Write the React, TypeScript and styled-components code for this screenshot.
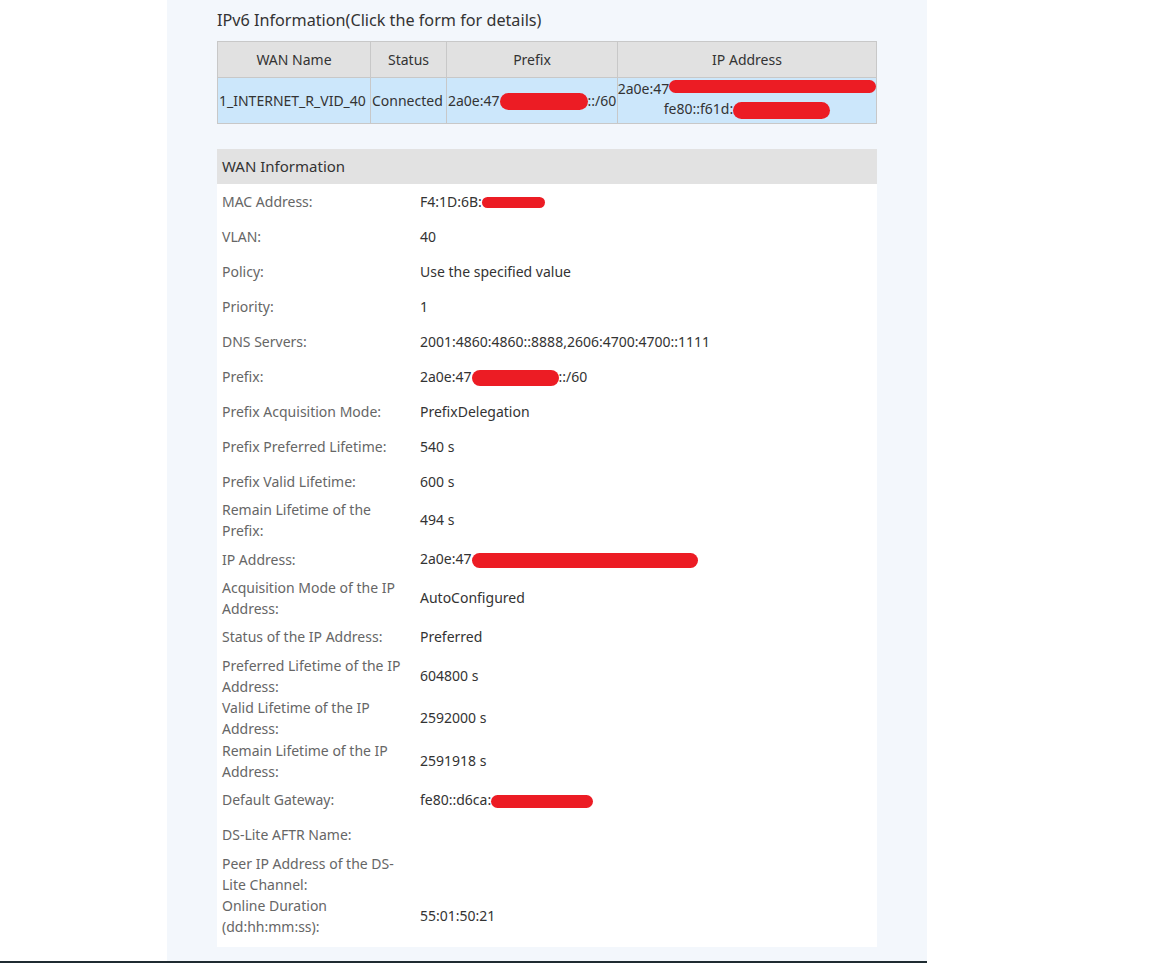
import React from 'react';
import styled, { createGlobalStyle } from 'styled-components';

const GlobalStyle = createGlobalStyle`
  html, body {
    margin: 0;
    padding: 0;
    background: #ffffff;
  }
  body {
    font-family: "Noto Sans", "Open Sans", Arial, sans-serif;
    color: #333333;
  }
`;

const Page = styled.div`
  display: flex;
  flex-direction: column;
  height: 963px;
  overflow: hidden;
`;

const Main = styled.div`
  flex: 1;
  min-height: 0;
  display: flex;
`;

const Panel = styled.div`
  margin-left: 167px;
  width: 760px;
  box-sizing: border-box;
  padding: 0 50px;
  background: #f3f7fc;
`;

const Footer = styled.div`
  flex: none;
  width: 927px;
  height: 2px;
  background: #1f2b31;
`;

const Title = styled.div`
  font-size: 16.2px;
  line-height: 22px;
  padding-top: 9px;
  margin-bottom: 10px;
  color: #333;
`;

const Table = styled.table`
  width: 660px;
  border-collapse: collapse;
  table-layout: fixed;
  font-size: 14px;
  cursor: pointer;
`;

const Th = styled.th<{ $w?: number }>`
  width: ${(p) => (p.$w ? `${p.$w}px` : 'auto')};
  height: 35px;
  padding: 0;
  font-weight: normal;
  background: #e1e1e1;
  border: 1px solid #c8c8c8;
  color: #333;
  text-align: center;
`;

const Td = styled.td<{ $center?: boolean }>`
  height: 45px;
  padding: 0 1px;
  background: #cce7fb;
  border: 1px solid #c8c8c8;
  text-align: ${(p) => (p.$center ? 'center' : 'left')};
  white-space: nowrap;
  overflow: hidden;
  line-height: 20px;
  color: #333;
`;

const Redact = styled.span<{ $w: number; $h?: number; $y?: number }>`
  display: inline-block;
  width: ${(p) => p.$w}px;
  height: ${(p) => p.$h ?? 14}px;
  background: #ec1c24;
  border-radius: 999px;
  vertical-align: middle;
  position: relative;
  top: ${(p) => p.$y ?? 0}px;
`;

const IpCell = styled.div`
  display: flex;
  flex-direction: column;
  align-items: center;
  margin-top: -4px;
`;

const Section = styled.div`
  margin-top: 25px;
  background: #ffffff;
  padding-bottom: 9px;
`;

const SectionHead = styled.div`
  height: 35px;
  line-height: 35px;
  padding-left: 5px;
  background: #e2e2e2;
  font-size: 15px;
  color: #333;
`;

const Row = styled.div`
  display: flex;
  align-items: center;
  min-height: 35px;
  font-size: 14px;
`;

const Label = styled.div`
  width: 188px;
  padding: 0.35px 10px 0.35px 5px;
  line-height: 21px;
  color: #666;
`;

const Value = styled.div`
  flex: 1;
  color: #333;
  line-height: 20px;
  white-space: nowrap;
`;

type Info = { label: string; value: React.ReactNode };

const rows: Info[] = [
  { label: 'MAC Address:', value: <>F4:1D:6B:<Redact $w={63} $h={11} /></> },
  { label: 'VLAN:', value: '40' },
  { label: 'Policy:', value: 'Use the specified value' },
  { label: 'Priority:', value: '1' },
  { label: 'DNS Servers:', value: '2001:4860:4860::8888,2606:4700:4700::1111' },
  { label: 'Prefix:', value: <>2a0e:47<Redact $w={87} $h={16} />::/60</> },
  { label: 'Prefix Acquisition Mode:', value: 'PrefixDelegation' },
  { label: 'Prefix Preferred Lifetime:', value: '540 s' },
  { label: 'Prefix Valid Lifetime:', value: '600 s' },
  { label: 'Remain Lifetime of the Prefix:', value: '494 s' },
  { label: 'IP Address:', value: <>2a0e:47<Redact $w={226} $h={15} /></> },
  { label: 'Acquisition Mode of the IP Address:', value: 'AutoConfigured' },
  { label: 'Status of the IP Address:', value: 'Preferred' },
  { label: 'Preferred Lifetime of the IP Address:', value: '604800 s' },
  { label: 'Valid Lifetime of the IP Address:', value: '2592000 s' },
  { label: 'Remain Lifetime of the IP Address:', value: '2591918 s' },
  { label: 'Default Gateway:', value: <>fe80::d6ca:<Redact $w={102} $h={13} /></> },
  { label: 'DS-Lite AFTR Name:', value: '' },
  { label: 'Peer IP Address of the DS-Lite Channel:', value: '' },
  { label: 'Online Duration (dd:hh:mm:ss):', value: '55:01:50:21' },
];

const App = () => {
  return (
    <Page>
      <GlobalStyle />
      <Main>
        <Panel>
          <Title>IPv6 Information(Click the form for details)</Title>
          <Table>
            <thead>
              <tr>
                <Th $w={152}>WAN Name</Th>
                <Th $w={75}>Status</Th>
                <Th $w={170}>Prefix</Th>
                <Th>IP Address</Th>
              </tr>
            </thead>
            <tbody>
              <tr>
                <Td>1_INTERNET_R_VID_40</Td>
                <Td>Connected</Td>
                <Td>
                  2a0e:47<Redact $w={88} $h={17} />::/60
                </Td>
                <Td $center>
                  <IpCell>
                    <span>
                      2a0e:47<Redact $w={207} $h={13} $y={-3} />
                    </span>
                    <span>
                      fe80::f61d:<Redact $w={97} $h={17} $y={1} />
                    </span>
                  </IpCell>
                </Td>
              </tr>
            </tbody>
          </Table>
          <Section>
            <SectionHead>WAN Information</SectionHead>
            {rows.map((r) => (
              <Row key={r.label}>
                <Label>{r.label}</Label>
                <Value>{r.value}</Value>
              </Row>
            ))}
          </Section>
        </Panel>
      </Main>
      <Footer />
    </Page>
  );
};

export default App;
